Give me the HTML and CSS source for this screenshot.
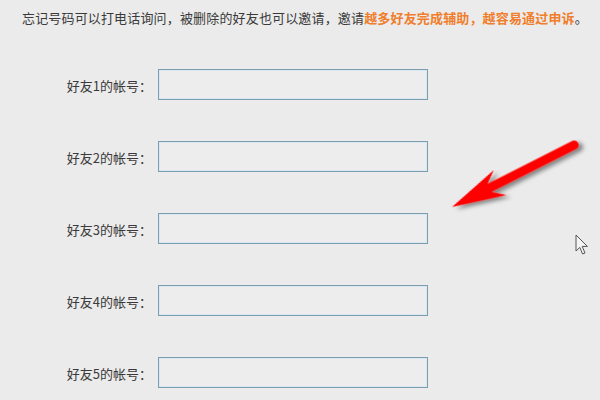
FILE: index.html
```html
<!DOCTYPE html>
<html lang="zh-CN">
<head>
<meta charset="utf-8">
<title>好友辅助申诉</title>
<link rel="stylesheet" href="styles.css">
</head>
<body>
<p class="notice">忘记号码可以打电话询问，被删除的好友也可以邀请，邀请<span class="hl">越多好友完成辅助，越容易通过申诉</span>。</p>
<form class="friends">
  <div class="row"><label class="lbl">好友1的帐号：</label><input class="acct" type="text"></div>
  <div class="row"><label class="lbl">好友2的帐号：</label><input class="acct" type="text"></div>
  <div class="row"><label class="lbl">好友3的帐号：</label><input class="acct" type="text"></div>
  <div class="row"><label class="lbl">好友4的帐号：</label><input class="acct" type="text"></div>
  <div class="row"><label class="lbl">好友5的帐号：</label><input class="acct" type="text"></div>
</form>
<svg class="overlay" width="600" height="400" viewBox="0 0 600 400">
  <defs>
    <filter id="sh" x="-20%" y="-50%" width="140%" height="200%">
      <feDropShadow dx="3" dy="4" stdDeviation="2" flood-color="#000" flood-opacity="0.45"/>
    </filter>
  </defs>
  <g transform="translate(452,207) rotate(-26.9)" filter="url(#sh)">
    <path d="M0,0 L54,-14 L42,-4.5 L137,-4.5 A4.5,4.5 0 0 1 137,4.5 L42,4.5 L54,14 Z" fill="#ff0000"/>
  </g>
  <g transform="translate(576,235)">
    <path d="M0,0 L0,16 L3.8,12.4 L6.6,19 L9,18 L6.2,11.4 L11.4,11.4 Z" fill="#f4f4f4" stroke="#555" stroke-width="1" stroke-linejoin="round"/>
  </g>
</svg>
</body>
</html>
```
FILE: styles.css
```css
html, body {
  margin: 0;
  padding: 0;
  background: #ebebeb;
  width: 600px;
  height: 400px;
  overflow: hidden;
  position: relative;
  font-family: "Noto Sans CJK SC", "Noto Sans", sans-serif;
}
.notice {
  margin: 0;
  padding: 9px 0 0 22px;
  font-size: 13px;
  line-height: 18px;
  letter-spacing: 0.16px;
  color: #3a3a3a;
  white-space: nowrap;
}
.hl {
  color: #f07e2c;
  font-weight: bold;
}
.friends {
  margin: 0;
  padding: 42px 0 0 0;
  display: flex;
  flex-direction: column;
  gap: 41px;
}
.row {
  display: flex;
  align-items: center;
  gap: 6px;
}
.lbl {
  width: 152px;
  text-align: right;
  font-size: 13px;
  color: #3a3a3a;
  line-height: 18px;
  padding-top: 2px;
}
.acct {
  box-sizing: border-box;
  width: 270px;
  height: 31px;
  margin: 0;
  padding: 0 6px;
  border: 1px solid #7b9db2;
  box-shadow: inset 0 0 0 1px #dbe8f0;
  background: #ededed;
  outline: none;
}
.overlay {
  position: absolute;
  left: 0;
  top: 0;
  pointer-events: none;
}
```
